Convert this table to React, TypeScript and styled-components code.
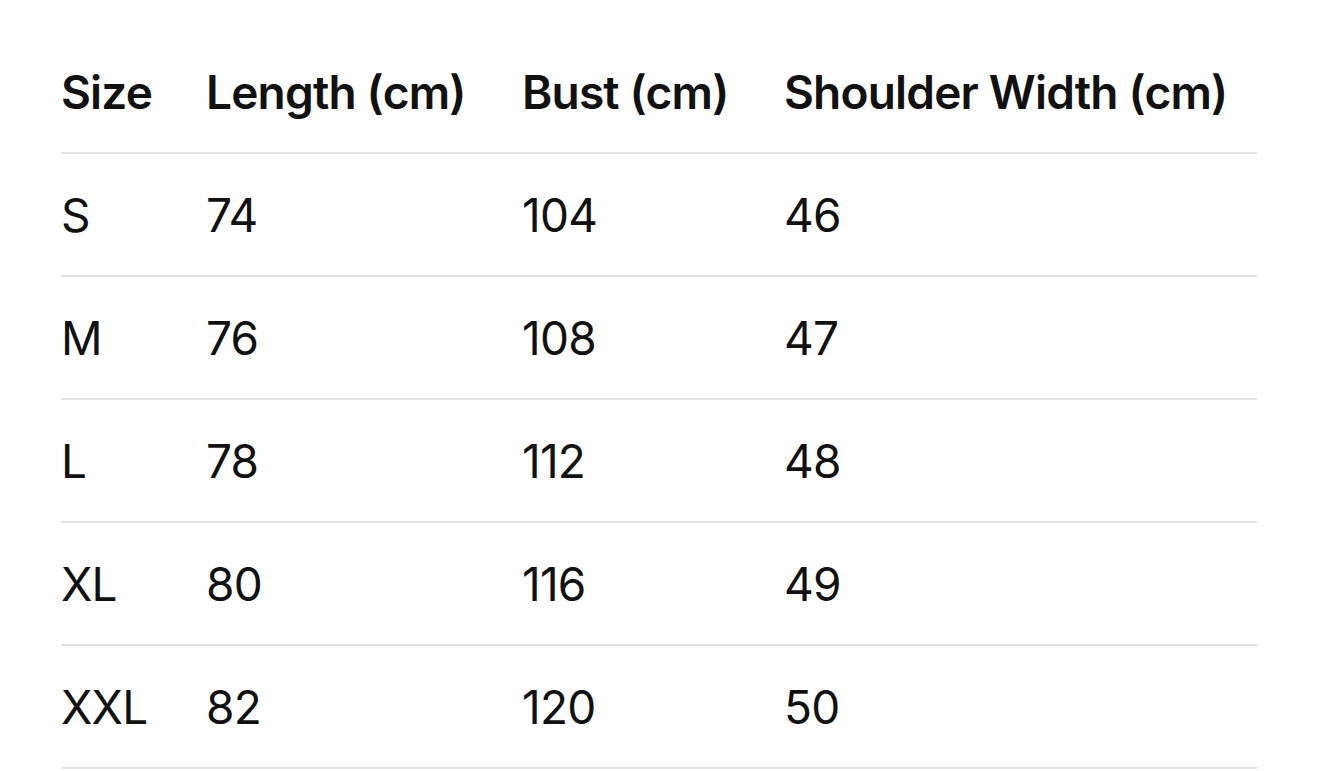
import React from "react";
import styled, { createGlobalStyle } from "styled-components";

const Global = createGlobalStyle`
  html, body { margin: 0; padding: 0; background: #ffffff; }
  body { font-family: Inter, "Noto Sans", "Liberation Sans", sans-serif; color: #111111; }
`;

const Table = styled.div`
  width: 1196px;
  margin: 31px 0 0 61px;
  display: flex;
  flex-direction: column;
`;

const Row = styled.div`
  display: grid;
  grid-template-columns: 145px 316px 262px 1fr;
  align-items: center;
  height: 121px;
  border-bottom: 2px solid #e3e3e3;
`;

const Cell = styled.div<{ $head?: boolean }>`
  font-size: 46px;
  line-height: 1;
  font-weight: ${(p) => (p.$head ? 600 : 400)};
  letter-spacing: ${(p) => (p.$head ? "-0.8px" : "-0.8px")};
  color: #111111;
  white-space: nowrap;
`;

const headers = ["Size", "Length (cm)", "Bust (cm)", "Shoulder Width (cm)"];
const rows = [
  ["S", "74", "104", "46"],
  ["M", "76", "108", "47"],
  ["L", "78", "112", "48"],
  ["XL", "80", "116", "49"],
  ["XXL", "82", "120", "50"],
];

export default function App() {
  return (
    <>
      <Global />
      <Table>
        <Row>
          {headers.map((h) => (
            <Cell $head key={h}>
              {h}
            </Cell>
          ))}
        </Row>
        {rows.map((r) => (
          <Row key={r[0]}>
            {r.map((c, i) => (
              <Cell key={i}>{c}</Cell>
            ))}
          </Row>
        ))}
      </Table>
    </>
  );
}
